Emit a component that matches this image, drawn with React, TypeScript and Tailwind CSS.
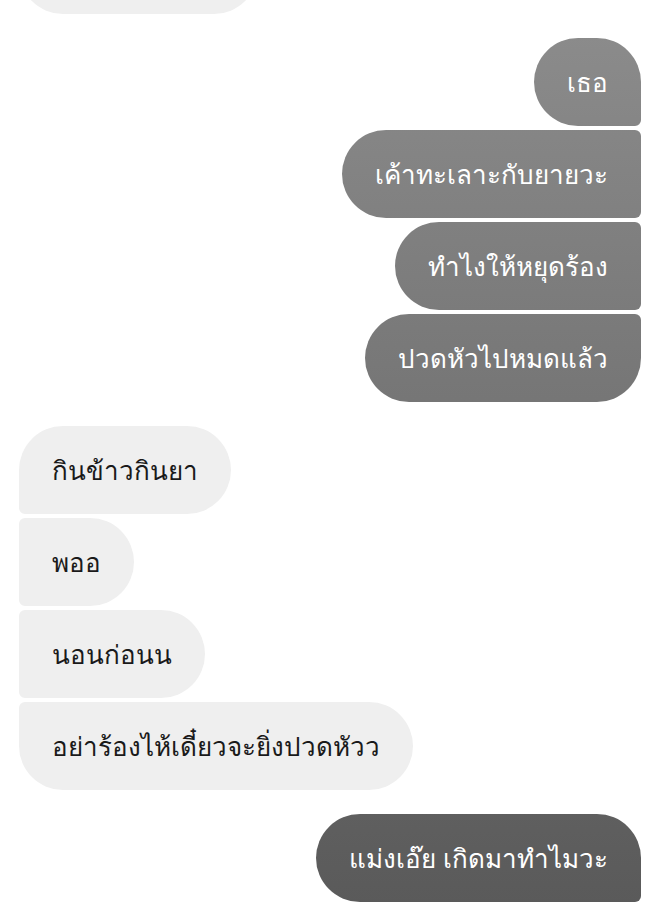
const messages: { from: 'me' | 'them'; text: string }[][] = [
    [{ from: 'them', text: '' }],
    [
        { from: 'me', text: 'เธอ' },
        { from: 'me', text: 'เค้าทะเลาะกับยายวะ' },
        { from: 'me', text: 'ทำไงให้หยุดร้อง' },
        { from: 'me', text: 'ปวดหัวไปหมดแล้ว' },
    ],
    [
        { from: 'them', text: 'กินข้าวกินยา' },
        { from: 'them', text: 'พออ' },
        { from: 'them', text: 'นอนก่อนน' },
        { from: 'them', text: 'อย่าร้องไห้เดี๋ยวจะยิ่งปวดหัวว' },
    ],
    [{ from: 'me', text: 'แม่งเอ๊ย เกิดมาทำไมวะ' }],
]

const Bubble = ({ from, text, first, last }: { from: 'me' | 'them'; text: string; first: boolean; last: boolean }) => {
    const mine = from === 'me'
    let radius = ''
    if (mine) {
        radius = 'rounded-l-[44px] ' + (first ? 'rounded-tr-[44px] ' : 'rounded-tr-[6px] ') + (last ? 'rounded-br-[44px]' : 'rounded-br-[6px]')
    } else {
        radius = 'rounded-r-[44px] ' + (first ? 'rounded-tl-[44px] ' : 'rounded-tl-[6px] ') + (last ? 'rounded-bl-[44px]' : 'rounded-bl-[6px]')
    }
    return (
        <div className={`flex ${mine ? 'justify-end' : 'justify-start'}`}>
            <div
                className={`h-[88px] flex items-center px-[33px] text-[26px] whitespace-nowrap ${text === '' ? 'w-[239px]' : ''} ${radius} ${mine
                    ? 'text-white bg-fixed bg-linear-to-b from-[#8d8d8d] to-[#5a5a5a]'
                    : 'text-[#1a1a1a] bg-[#efefef]'
                    }`}
            >
                {text}
            </div>
        </div>
    )
}

export default function App() {
    return (
        <div className="w-[656px] h-[904px] overflow-hidden bg-white font-['Noto_Sans',sans-serif]">
            {/* first bubble is cut off by the top of the screen */}
            <div className="-mt-[74px] pl-[19px] pr-[15px] flex flex-col gap-[24px]">
                {messages.map((group, gi) => (
                    <div key={gi} className="flex flex-col gap-[4px]">
                        {group.map((m, i) => (
                            <Bubble key={i} from={m.from} text={m.text} first={i === 0} last={i === group.length - 1 && gi !== messages.length - 1} />
                        ))}
                    </div>
                ))}
            </div>
        </div>
    )
}
